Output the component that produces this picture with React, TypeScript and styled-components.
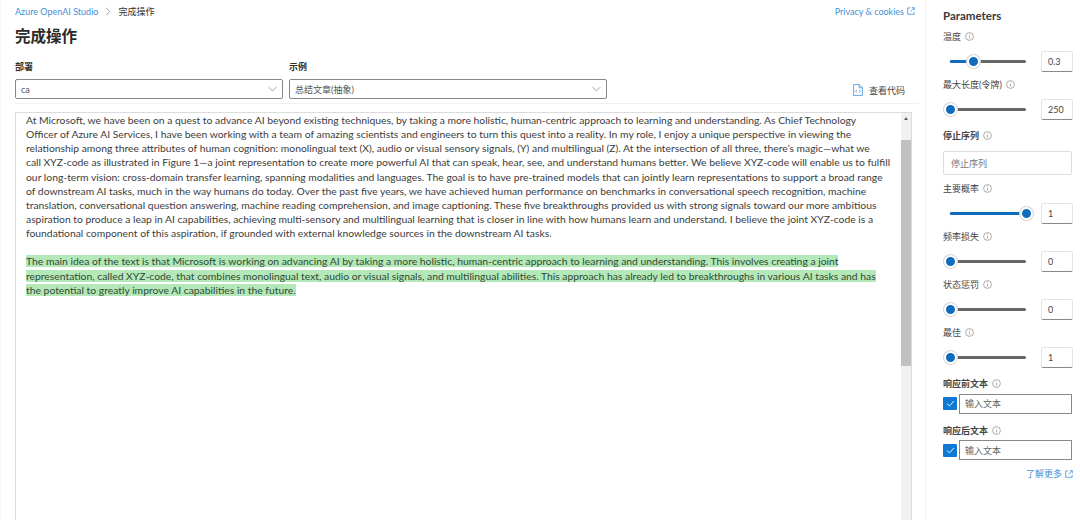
import React from 'react';
import styled, { createGlobalStyle } from 'styled-components';

const GlobalStyle = createGlobalStyle`
  html, body { margin: 0; padding: 0; background: #fff; }
  body { width: 1080px; height: 520px; overflow: hidden; font-family: Lato, "Noto Sans CJK SC", sans-serif; color: #323130; }
  * { box-sizing: border-box; }
`;

const Page = styled.div`
  display: flex;
  width: 1080px;
  height: 520px;
  overflow: hidden;
`;

const Main = styled.main`
  width: 926px;
  flex: none;
  padding: 0 6px 0 14px;
  border-left: 1px solid #f6f6f6;
  border-right: 1px solid #f0f0f0;
  display: flex;
  flex-direction: column;
`;

const TopRow = styled.div`
  display: flex;
  justify-content: space-between;
  align-items: center;
  height: 22px;
  font-size: 9px;
  padding-right: 4px;
`;

const Crumbs = styled.div`
  display: flex;
  align-items: center;
  gap: 7px;
`;

const BlueLink = styled.a`
  color: #3f8fd6;
  display: inline-flex;
  align-items: center;
  gap: 3px;
  font-size: 9px;
`;

const Title = styled.h1`
  margin: 2px 0 0;
  height: 24px;
  line-height: 24px;
  font-size: 15.5px;
  font-weight: 700;
  color: #2b2a29;
`;

const FieldRow = styled.div`
  display: flex;
  align-items: flex-end;
  margin-top: 12px;
  height: 44px;
  border-bottom: 1px solid #f0f0f0;
`;

const Field = styled.div<{ $w: number }>`
  width: ${p => p.$w}px;
  margin-right: 6px;
  align-self: flex-start;
`;

const FieldLabel = styled.div`
  font-size: 9px;
  font-weight: 700;
  height: 14px;
  line-height: 14px;
  margin-bottom: 5px;
`;

const SelectBox = styled.div`
  height: 20px;
  border: 1px solid #8a8886;
  border-radius: 2px;
  padding: 0 5px;
  display: flex;
  align-items: center;
  justify-content: space-between;
  font-size: 9px;
  color: #555;
`;

const CodeButton = styled.div`
  margin-left: auto;
  margin-right: 14px;
  height: 20px;
  margin-bottom: 3px;
  display: flex;
  align-items: center;
  gap: 6px;
  font-size: 9px;
  color: #444;
`;

const EditorWrap = styled.div`
  flex: 1;
  margin-top: 8px;
  margin-right: 7px;
  border: 1px solid #dcdcdc;
  border-bottom: none;
  display: flex;
  min-height: 0;
`;

const Editor = styled.div`
  flex: 1;
  padding: 0 0 0 10px;
  font-family: Lato, sans-serif;
  font-size: 10.35px;
  line-height: 14.15px;
  color: #3c3c3c;
  overflow: hidden;
`;

const Line = styled.div`
  white-space: nowrap;
  height: 14.15px;
`;

const Gap = styled.div`
  height: 14.15px;
`;

const Mark = styled.span`
  background: #b5e8b8;
  color: #2f4a34;
`;

const ScrollTrack = styled.div`
  width: 10px;
  background: #f1f1f1;
  position: relative;
  padding-top: 27px;
`;

const ScrollArrow = styled.div`
  position: absolute;
  top: 4px;
  left: 2.5px;
  width: 0;
  height: 0;
  border-left: 2.5px solid transparent;
  border-right: 2.5px solid transparent;
  border-bottom: 3px solid #606060;
`;

const ScrollThumb = styled.div`
  height: 226px;
  background: #c1c1c1;
`;

const Panel = styled.aside`
  flex: 1;
  padding: 9px 8px 0 17px;
  display: flex;
  flex-direction: column;
`;

const PanelTitle = styled.div`
  font-size: 11.5px;
  font-weight: 700;
  height: 14px;
  line-height: 14px;
  color: #3a3a3a;
  margin-bottom: 7px;
`;

const ParamLabel = styled.div<{ $bold?: boolean }>`
  display: flex;
  align-items: center;
  gap: 4px;
  height: 13px;
  margin-top: ${p => (p.$bold ? 3 : 0)}px;
  font-size: 9px;
  font-weight: ${p => (p.$bold ? 700 : 400)};
  color: #444;
`;

const SliderRow = styled.div`
  display: flex;
  align-items: center;
  height: 22px;
  margin-top: 7px;
  margin-bottom: 6px;
`;

const SliderTrack = styled.div`
  position: relative;
  width: 76px;
  margin-left: 7px;
  margin-right: 15px;
  height: 3px;
  background: #666;
  border-radius: 2px;
`;

const SliderFill = styled.div`
  height: 100%;
  background: #0f6cbd;
  border-radius: 2px;
`;

const Thumb = styled.div`
  position: absolute;
  top: -5px;
  width: 13px;
  height: 13px;
  margin-left: -6px;
  border-radius: 50%;
  background: #0f6cbd;
  border: 2.5px solid #fff;
  box-shadow: 0 0 0 1px #d6d6d6;
`;

const NumberBox = styled.div`
  width: 32px;
  height: 21px;
  border: 1px solid #e4e4e4;
  border-bottom: 1px solid #8a8886;
  border-radius: 2px;
  font-size: 9px;
  color: #444;
  display: flex;
  align-items: center;
  padding-left: 6px;
`;

const StopInput = styled.div`
  width: 129px;
  height: 24px;
  margin: 9px 0 7px;
  border: 1px solid #dedede;
  border-radius: 2px;
  font-size: 9px;
  color: #777;
  display: flex;
  align-items: center;
  padding-left: 7px;
`;

const CheckRow = styled.div`
  display: flex;
  align-items: center;
  gap: 2px;
  margin: 3.5px 0 7px;
`;

const CheckBox = styled.div`
  width: 14px;
  height: 13px;
  background: #0f78d4;
  border-radius: 1px;
  display: flex;
  align-items: center;
  justify-content: center;
`;

const TextInput = styled.div`
  width: 113px;
  height: 20px;
  border: 1px solid #8a8886;
  font-size: 9px;
  color: #666;
  display: flex;
  align-items: center;
  padding-left: 5px;
`;

const LearnMore = styled.div`
  display: flex;
  justify-content: flex-end;
`;

const Info = () => (
  <svg width="9" height="9" viewBox="0 0 9 9" fill="none" stroke="#8a8886" strokeWidth="0.7">
    <circle cx="4.5" cy="4.5" r="3.9" />
    <path d="M4.5 4v2.6M4.5 2.4v.8" />
  </svg>
);

const External = () => (
  <svg width="8" height="8" viewBox="0 0 8 8" fill="none" stroke="#3f8fd6" strokeWidth="0.8">
    <path d="M3 .9H.7v6.4h6.4V5M4.6.7h2.7v2.7M7.2.8 3.6 4.4" />
  </svg>
);

const Chevron = () => (
  <svg width="9" height="6" viewBox="0 0 9 6" fill="none" stroke="#8a8886" strokeWidth="0.8">
    <path d="M.6 1l3.9 3.9L8.4 1" />
  </svg>
);

const textLines = [
  'At Microsoft, we have been on a quest to advance AI beyond existing techniques, by taking a more holistic, human-centric approach to learning and understanding. As Chief Technology',
  'Officer of Azure AI Services, I have been working with a team of amazing scientists and engineers to turn this quest into a reality. In my role, I enjoy a unique perspective in viewing the',
  'relationship among three attributes of human cognition: monolingual text (X), audio or visual sensory signals, (Y) and multilingual (Z). At the intersection of all three, there\u2019s magic\u2014what we',
  'call XYZ-code as illustrated in Figure 1\u2014a joint representation to create more powerful AI that can speak, hear, see, and understand humans better. We believe XYZ-code will enable us to fulfill',
  'our long-term vision: cross-domain transfer learning, spanning modalities and languages. The goal is to have pre-trained models that can jointly learn representations to support a broad range',
  'of downstream AI tasks, much in the way humans do today. Over the past five years, we have achieved human performance on benchmarks in conversational speech recognition, machine',
  'translation, conversational question answering, machine reading comprehension, and image captioning. These five breakthroughs provided us with strong signals toward our more ambitious',
  'aspiration to produce a leap in AI capabilities, achieving multi-sensory and multilingual learning that is closer in line with how humans learn and understand. I believe the joint XYZ-code is a',
  'foundational component of this aspiration, if grounded with external knowledge sources in the downstream AI tasks.',
];

const resultLines = [
  'The main idea of the text is that Microsoft is working on advancing AI by taking a more holistic, human-centric approach to learning and understanding. This involves creating a joint',
  'representation, called XYZ-code, that combines monolingual text, audio or visual signals, and multilingual abilities. This approach has already led to breakthroughs in various AI tasks and has',
  'the potential to greatly improve AI capabilities in the future.',
];

const Slider = ({ pct, value }: { pct: number; value: string }) => (
  <SliderRow>
    <SliderTrack>
      <SliderFill style={{ width: `${pct}%` }} />
      <Thumb style={{ left: `${pct}%` }} />
    </SliderTrack>
    <NumberBox>{value}</NumberBox>
  </SliderRow>
);

const Check = () => (
  <CheckBox>
    <svg width="9" height="7" viewBox="0 0 9 7" fill="none" stroke="#fff" strokeWidth="0.9">
      <path d="M1 3.6l2.4 2.3L8 1" />
    </svg>
  </CheckBox>
);

export default function App() {
  return (
    <Page>
      <GlobalStyle />
      <Main>
        <TopRow>
          <Crumbs>
            <BlueLink>Azure OpenAI Studio</BlueLink>
            <svg width="6" height="9" viewBox="0 0 6 9" fill="none" stroke="#777" strokeWidth="0.7">
              <path d="M1 .8l3.7 3.7L1 8.2" />
            </svg>
            <span>完成操作</span>
          </Crumbs>
          <BlueLink>Privacy &amp; cookies <External /></BlueLink>
        </TopRow>
        <Title>完成操作</Title>
        <FieldRow>
          <Field $w={268}>
            <FieldLabel>部署</FieldLabel>
            <SelectBox>ca <Chevron /></SelectBox>
          </Field>
          <Field $w={318}>
            <FieldLabel>示例</FieldLabel>
            <SelectBox>总结文章(抽象) <Chevron /></SelectBox>
          </Field>
          <CodeButton>
            <svg width="10" height="12" viewBox="0 0 10 12" fill="none" stroke="#3f8fd6" strokeWidth="0.8">
              <path d="M.6.6h5.6l3.2 3.2v7.6H.6zM6.2.6v3.2h3.2M3.8 6l-1.2 1.3 1.2 1.3M6.2 6l1.2 1.3-1.2 1.3" />
            </svg>
            查看代码
          </CodeButton>
        </FieldRow>
        <EditorWrap>
          <Editor>
            {textLines.map(l => <Line key={l}>{l}</Line>)}
            <Gap />
            {resultLines.map(l => <Line key={l}><Mark>{l}</Mark></Line>)}
          </Editor>
          <ScrollTrack>
            <ScrollArrow />
            <ScrollThumb />
          </ScrollTrack>
        </EditorWrap>
      </Main>
      <Panel>
        <PanelTitle>Parameters</PanelTitle>
        <ParamLabel>温度 <Info /></ParamLabel>
        <Slider pct={30} value="0.3" />
        <ParamLabel>最大长度(令牌) <Info /></ParamLabel>
        <Slider pct={0} value="250" />
        <ParamLabel $bold>停止序列 <Info /></ParamLabel>
        <StopInput>停止序列</StopInput>
        <ParamLabel>主要概率 <Info /></ParamLabel>
        <Slider pct={100} value="1" />
        <ParamLabel>频率损失 <Info /></ParamLabel>
        <Slider pct={0} value="0" />
        <ParamLabel>状态惩罚 <Info /></ParamLabel>
        <Slider pct={0} value="0" />
        <ParamLabel>最佳 <Info /></ParamLabel>
        <Slider pct={0} value="1" />
        <ParamLabel $bold>响应前文本 <Info /></ParamLabel>
        <CheckRow><Check /><TextInput>输入文本</TextInput></CheckRow>
        <ParamLabel $bold>响应后文本 <Info /></ParamLabel>
        <CheckRow><Check /><TextInput>输入文本</TextInput></CheckRow>
        <LearnMore><BlueLink>了解更多 <External /></BlueLink></LearnMore>
      </Panel>
    </Page>
  );
}
